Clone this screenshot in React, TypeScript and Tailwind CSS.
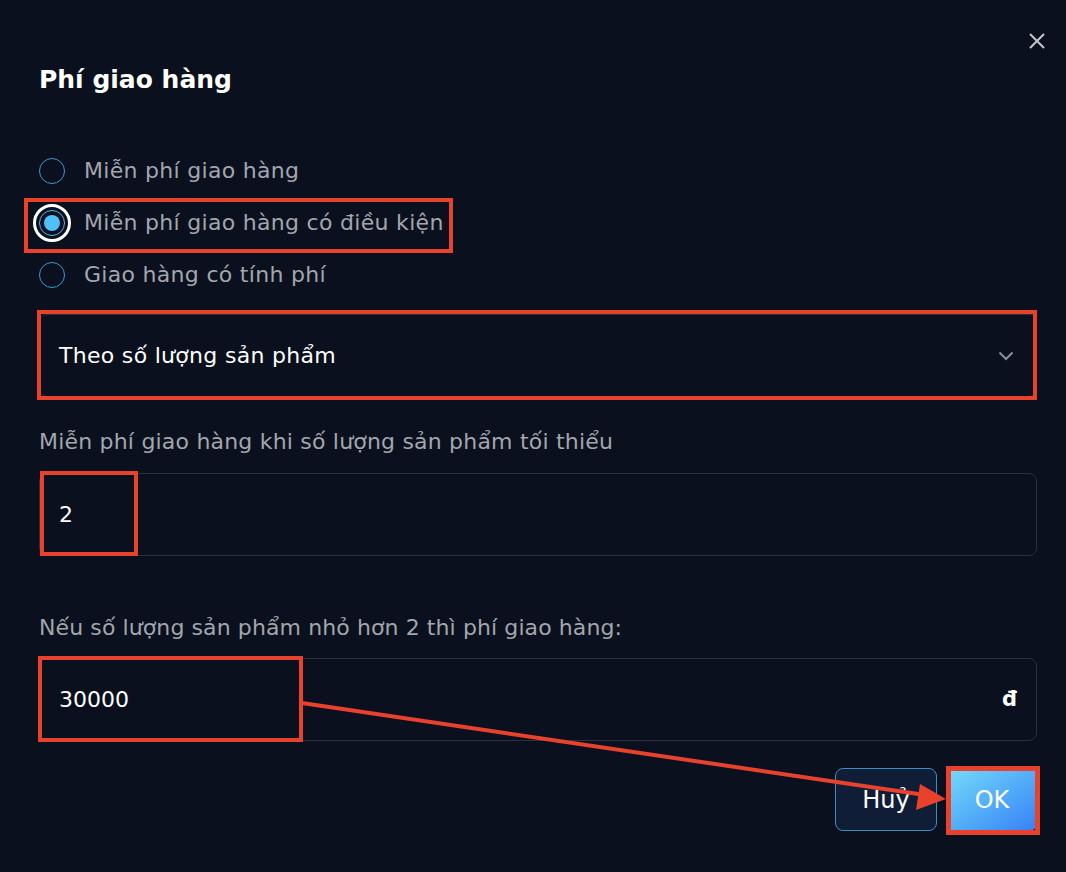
import React from "react";

function Radio({ label, checked }: { label: string; checked?: boolean }) {
  return (
    <div className="flex h-[52px] items-center gap-[19px]">
      {checked ? (
        <div className="ml-[-6px] flex h-[38px] w-[38px] items-center justify-center rounded-full border-[3px] border-white">
          <div className="flex h-[26px] w-[26px] items-center justify-center rounded-full border border-[#4fb8ee]">
            <div className="h-[16px] w-[16px] rounded-full bg-[#4fc0f8]" />
          </div>
        </div>
      ) : (
        <div className="h-[26px] w-[26px] rounded-full border-[1.5px] border-[#3a9ad0]" />
      )}
      <span className={`text-[22px] leading-[28px] tracking-[0.3px] text-[#a3a6ad] ${checked ? "ml-[-6px]" : ""}`}>{label}</span>
    </div>
  );
}

export default function App() {
  return (
    <div
      className="relative h-[872px] w-[1066px] overflow-hidden bg-[#0a101d] text-white"
      style={{ fontFamily: "'DejaVu Sans', 'Open Sans', sans-serif" }}
    >
      <div className="flex flex-col pl-[39px] pr-[29px] pt-[62px]">
        <h1 className="text-[25px] font-bold leading-[36px] text-white">Phí giao hàng</h1>

        <div className="mt-[47px] flex flex-col">
          <Radio label="Miễn phí giao hàng" />
          <Radio label="Miễn phí giao hàng có điều kiện" checked />
          <Radio label="Giao hàng có tính phí" />
        </div>

        <div className="mt-[13px] flex h-[83px] items-center justify-between rounded-lg border border-[#2b303b] pl-[19px] pr-[22px]">
          <span className="text-[22px] tracking-[0.3px] text-white">Theo số lượng sản phẩm</span>
          <svg width="16" height="10" viewBox="0 0 16 10" fill="none">
            <path d="M1.5 1.5 L8 8 L14.5 1.5" stroke="#8b8f97" strokeWidth="2" />
          </svg>
        </div>

        <div className="mt-[31px] text-[22px] leading-[28px] tracking-[0.2px] text-[#a3a6ad]">
          Miễn phí giao hàng khi số lượng sản phẩm tối thiểu
        </div>
        <div className="mt-[17px] flex h-[83px] items-center rounded-lg border border-[#2b303b] pl-[19px]">
          <span className="text-[22px] text-white">2</span>
        </div>

        <div className="mt-[58px] text-[22px] leading-[28px] tracking-[0.1px] text-[#a3a6ad]">
          Nếu số lượng sản phẩm nhỏ hơn 2 thì phí giao hàng:
        </div>
        <div className="mt-[16px] flex h-[83px] items-center justify-between rounded-lg border border-[#2b303b] pl-[19px] pr-[19px]">
          <span className="text-[22px] text-white">30000</span>
          <span className="text-[21px] font-bold text-white">đ</span>
        </div>

        <div className="mt-[27px] flex justify-end gap-[10px]">
          <button className="flex h-[63px] w-[102px] items-center justify-center rounded-lg border border-[#3b8dc2] bg-[#0f1d36] text-[24px] text-white">
            Huỷ
          </button>
          <button className="flex h-[63px] w-[90px] items-center justify-center rounded-lg bg-gradient-to-br from-[#76dcf9] to-[#3a7ff5] text-[24px] text-white">
            OK
          </button>
        </div>
      </div>

      <button className="absolute right-[20px] top-[32px] text-[#c3c6cc]">
        <svg width="18" height="18" viewBox="0 0 18 18" fill="none">
          <path d="M2 2 L16 16 M16 2 L2 16" stroke="currentColor" strokeWidth="2" />
        </svg>
      </button>

      {/* annotations */}
      <div className="pointer-events-none absolute left-[24px] top-[198px] h-[55px] w-[429px] border-[4px] border-[#e8412c]" />
      <div className="pointer-events-none absolute left-[37px] top-[310px] h-[90px] w-[1000px] border-[4px] border-[#e8412c]" />
      <div className="pointer-events-none absolute left-[40px] top-[471px] h-[85px] w-[98px] border-[4px] border-[#e8412c]" />
      <div className="pointer-events-none absolute left-[38px] top-[656px] h-[86px] w-[265px] border-[4px] border-[#e8412c]" />
      <div className="pointer-events-none absolute left-[946px] top-[766px] h-[69px] w-[94px] border-[5px] border-[#e8412c]" />
      <svg className="pointer-events-none absolute left-0 top-0" width="1066" height="872">
        <line x1="302" y1="703" x2="925" y2="795" stroke="#e8412c" strokeWidth="4" />
        <polygon points="946,799 920,784 916,810" fill="#e8412c" />
      </svg>
    </div>
  );
}
